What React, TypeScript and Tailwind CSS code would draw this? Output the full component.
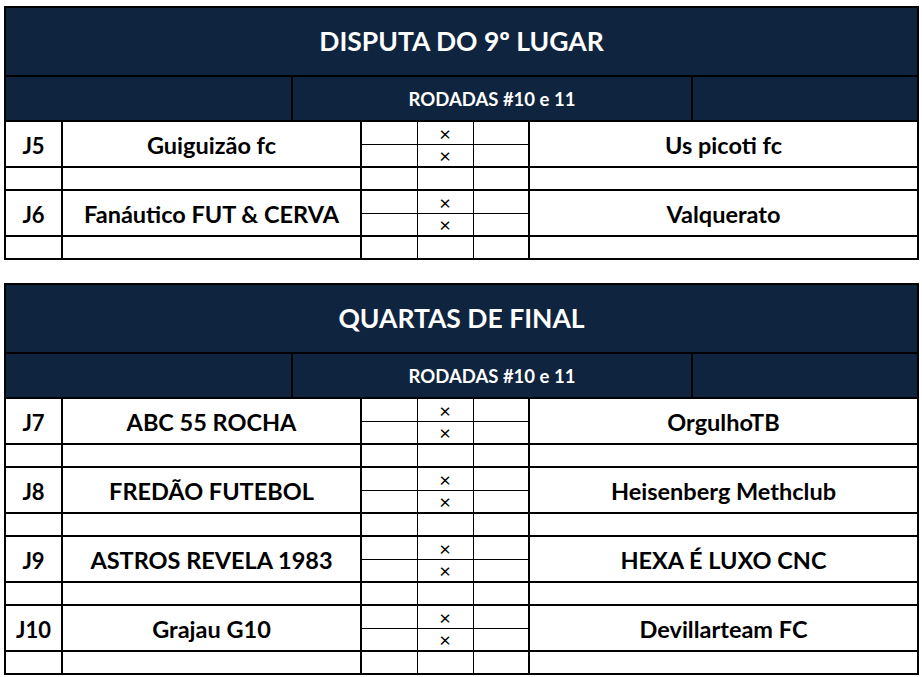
import React from "react";

type Match = { id: string; home: string; away: string };

const disputa: Match[] = [
  { id: "J5", home: "Guiguizão fc", away: "Us picoti fc" },
  { id: "J6", home: "Fanáutico FUT & CERVA", away: "Valquerato" },
];

const quartas: Match[] = [
  { id: "J7", home: "ABC 55 ROCHA", away: "OrgulhoTB" },
  { id: "J8", home: "FREDÃO FUTEBOL", away: "Heisenberg Methclub" },
  { id: "J9", home: "ASTROS REVELA 1983", away: "HEXA É LUXO CNC" },
  { id: "J10", home: "Grajau G10", away: "Devillarteam FC" },
];

const thick = "border-2 border-black";
const team = `${thick} pt-[4px] text-center text-[23.5px] font-bold leading-none`;

function MatchRows({ m }: { m: Match }) {
  return (
    <>
      <tr className="h-[23px]">
        <td rowSpan={2} className={`${thick} pt-[4px] text-center text-[22px] font-bold leading-none`}>
          {m.id}
        </td>
        <td rowSpan={2} className={team}>
          {m.home}
        </td>
        <td className="border-l-2 border-r border-t-2 border-b border-black" />
        <td className="border-x border-t-2 border-b border-black text-center text-[20px] leading-none">
          ×
        </td>
        <td className="border-l border-r-2 border-t-2 border-b border-black" />
        <td rowSpan={2} className={team}>
          {m.away}
        </td>
      </tr>
      <tr className="h-[23px]">
        <td className="border-l-2 border-r border-t border-b-2 border-black" />
        <td className="border-x border-t border-b-2 border-black text-center text-[20px] leading-none">
          ×
        </td>
        <td className="border-l border-r-2 border-t border-b-2 border-black" />
      </tr>
      <tr className="h-[23px]">
        <td className={thick} />
        <td className={thick} />
        <td className="border-l-2 border-r border-y-2 border-black" />
        <td className="border-x border-y-2 border-black" />
        <td className="border-l border-r-2 border-y-2 border-black" />
        <td className={thick} />
      </tr>
    </>
  );
}

function Bracket({ title, matches }: { title: string; matches: Match[] }) {
  return (
    <table className="ml-[4px] border-collapse table-fixed w-[913px]">
      <colgroup>
        <col className="w-[57px]" />
        <col className="w-[299px]" />
        <col className="w-[56px]" />
        <col className="w-[56px]" />
        <col className="w-[56px]" />
        <col className="w-[389px]" />
      </colgroup>
      <tbody>
        <tr className="h-[69px]">
          <td
            colSpan={6}
            className={`${thick} bg-[#0f243e] text-center text-[26.5px] font-bold text-white`}
          >
            {title}
          </td>
        </tr>
        <tr className="h-[45px]">
          <td colSpan={6} className={`${thick} bg-[#0f243e] p-0`}>
            <div className="flex h-[43px] items-stretch">
              <div className="w-[287px] border-r-2 border-black" />
              <div className="flex w-[400px] items-center justify-center border-r-2 border-black pt-[3px] text-[18.5px] font-bold text-white">
                RODADAS #10 e 11
              </div>
              <div className="flex-1" />
            </div>
          </td>
        </tr>
        {matches.map((m) => (
          <MatchRows key={m.id} m={m} />
        ))}
      </tbody>
    </table>
  );
}

export default function App() {
  return (
    <div
      className="min-h-[677px] w-[922px] bg-white pt-[6px] text-black"
      style={{ fontFamily: "Lato, 'Open Sans', sans-serif" }}
    >
      <Bracket title="DISPUTA DO 9º LUGAR" matches={disputa} />
      <div className="h-[23px]" />
      <Bracket title="QUARTAS DE FINAL" matches={quartas} />
    </div>
  );
}
